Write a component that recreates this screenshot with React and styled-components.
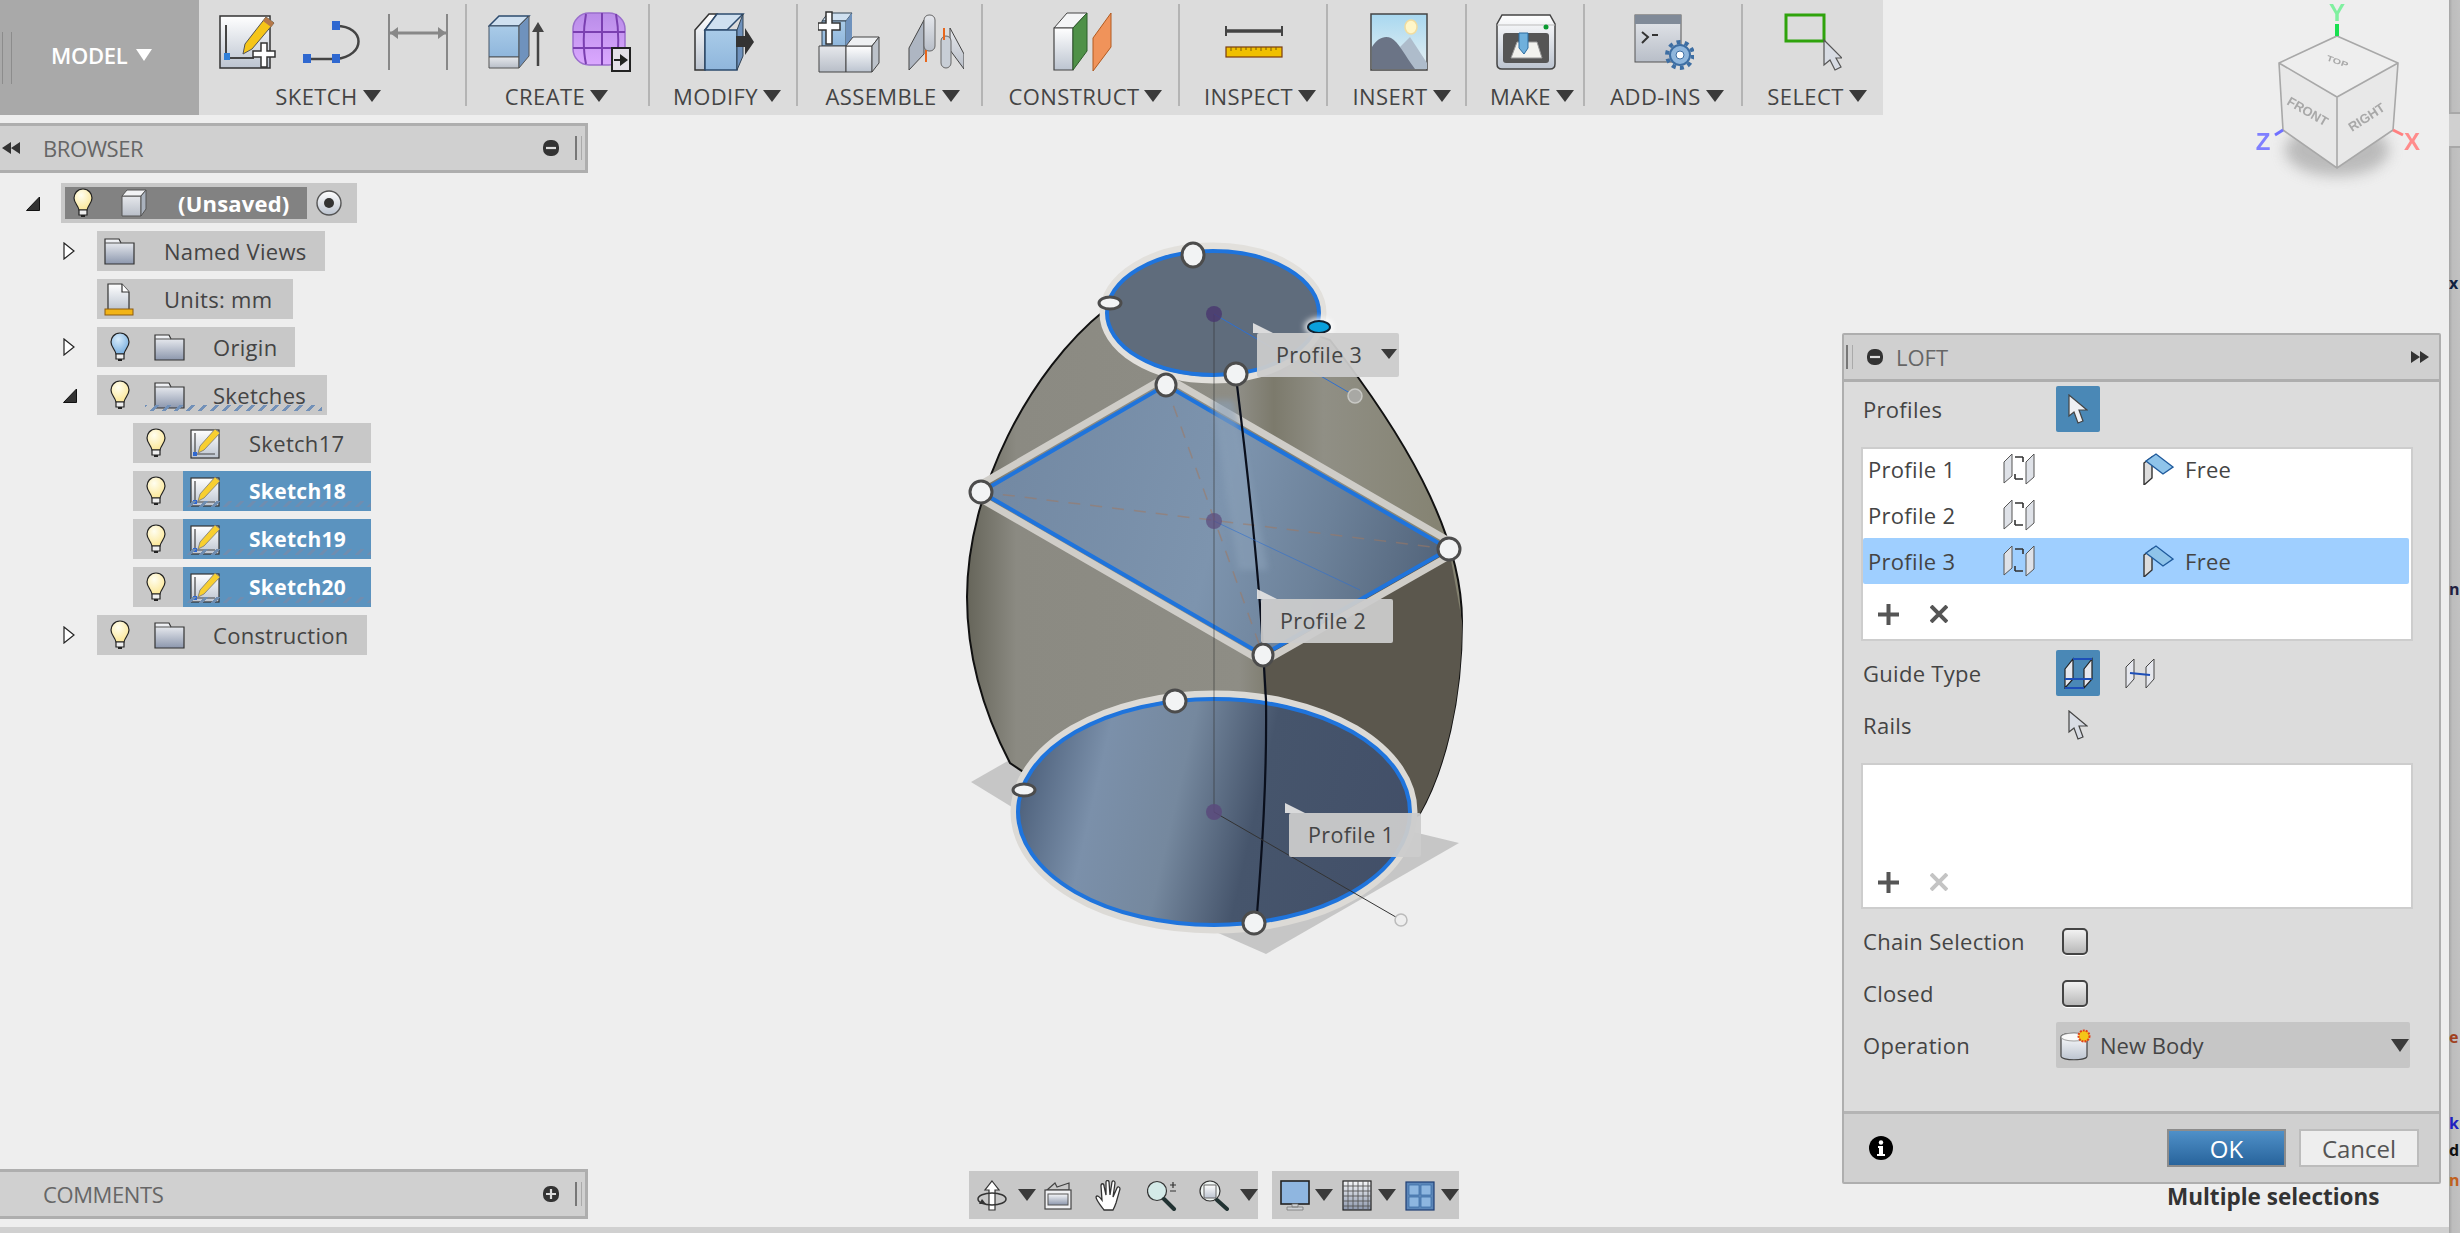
import styled, { createGlobalStyle } from "styled-components";

const tree = [
  { label: "Named Views", w: 228, icon: "folder", arrow: "closed", indent: 0 },
  { label: "Units: mm", w: 196, icon: "units", indent: 0 },
  { label: "Origin", w: 198, bulb: "blue", icon: "folder", arrow: "closed", indent: 0 },
  { label: "Sketches", w: 230, bulb: "yellow", icon: "folder", arrow: "open", indent: 0, ticks: true },
  { label: "Sketch17", w: 238, bulb: "yellow", icon: "sketch", indent: 36 },
  { label: "Sketch18", w: 238, bulb: "yellow", icon: "sketch", indent: 36, selected: true },
  { label: "Sketch19", w: 238, bulb: "yellow", icon: "sketch", indent: 36, selected: true },
  { label: "Sketch20", w: 238, bulb: "yellow", icon: "sketch", indent: 36, selected: true },
  { label: "Construction", w: 270, bulb: "yellow", icon: "folder", arrow: "closed", indent: 0 },
];

function Defs() {
  return (
    <HiddenSvg>
      <defs>
        <linearGradient id="paper" x1="0" y1="0" x2="0" y2="1">
          <stop offset="0" stopColor="#ffffff" />
          <stop offset="1" stopColor="#bcc4d0" />
        </linearGradient>
        <linearGradient id="steel" x1="0" y1="0" x2="0" y2="1">
          <stop offset="0" stopColor="#e6e8ec" />
          <stop offset="1" stopColor="#b8bec8" />
        </linearGradient>
        <linearGradient id="folder" x1="0" y1="0" x2="0" y2="1">
          <stop offset="0" stopColor="#f6f7f9" />
          <stop offset="1" stopColor="#8c97ad" />
        </linearGradient>
        <linearGradient id="blueFace" x1="0" y1="0" x2="0" y2="1">
          <stop offset="0" stopColor="#a9cbe8" />
          <stop offset="1" stopColor="#8fb6dc" />
        </linearGradient>
        <linearGradient id="sky" x1="0" y1="0" x2="0" y2="1">
          <stop offset="0" stopColor="#a8d8f0" />
          <stop offset="1" stopColor="#e8f0f2" />
        </linearGradient>
        <radialGradient id="bulbY" cx=".4" cy=".3" r=".8">
          <stop offset="0" stopColor="#fffef0" />
          <stop offset="1" stopColor="#fbe48c" />
        </radialGradient>
        <radialGradient id="bulbB" cx=".4" cy=".3" r=".8">
          <stop offset="0" stopColor="#d8ecfb" />
          <stop offset="1" stopColor="#6ea8dc" />
        </radialGradient>
        <linearGradient id="purple" x1="0" y1="0" x2="0" y2="1">
          <stop offset="0" stopColor="#b98ce8" />
          <stop offset="1" stopColor="#dba8ff" />
        </linearGradient>
        <linearGradient id="bodyFill" gradientUnits="userSpaceOnUse" x1="967" y1="0" x2="1462" y2="0">
          <stop offset="0" stopColor="#66655a" />
          <stop offset=".1" stopColor="#8b8a82" />
          <stop offset=".55" stopColor="#8e8d85" />
          <stop offset=".62" stopColor="#7c7a6c" />
          <stop offset=".72" stopColor="#908f85" />
          <stop offset="1" stopColor="#83816f" />
        </linearGradient>
        <linearGradient id="diamondFill" gradientUnits="userSpaceOnUse" x1="980" y1="470" x2="1449" y2="600">
          <stop offset="0" stopColor="#7288a2" />
          <stop offset=".5" stopColor="#7d94ae" />
          <stop offset=".72" stopColor="#6c8199" />
          <stop offset="1" stopColor="#4f6076" />
        </linearGradient>
        <linearGradient id="baseFill" gradientUnits="userSpaceOnUse" x1="1018" y1="770" x2="1410" y2="860">
          <stop offset="0" stopColor="#4a5d78" />
          <stop offset=".2" stopColor="#7b90aa" />
          <stop offset=".4" stopColor="#75889e" />
          <stop offset=".6" stopColor="#46556c" />
          <stop offset="1" stopColor="#424f68" />
        </linearGradient>
        <filter id="soft" x="-30%" y="-30%" width="160%" height="160%">
          <feGaussianBlur stdDeviation="7" />
        </filter>
        <filter id="softer" x="-30%" y="-30%" width="160%" height="160%">
          <feGaussianBlur stdDeviation="3" />
        </filter>
      </defs>
    </HiddenSvg>
  );
}

function SketchIcon() {
  return (
    <svg width="58" height="58" viewBox="0 0 58 58">
      <path d="M2 3h50v52H2z" fill="url(#paper)" stroke="#333" strokeWidth="1.5" />
      <path d="M8 12v33h28" fill="none" stroke="#444" strokeWidth="2" />
      <rect x="6" y="40" width="6" height="7" fill="#2f7fd8" />
      <path d="M48 4l8 6-22 26-9 5 2-10z" fill="#f5c518" stroke="#555" strokeWidth="1" />
      <path d="M48 4l8 6-3 4-8-6z" fill="#b5784a" />
      <path d="M35 38h8v-8h6v8h8v6h-8v10h-6V44h-8z" fill="#fff" stroke="#333" strokeWidth="1.5" />
    </svg>
  );
}

function SplineIcon() {
  return (
    <svg width="60" height="44" viewBox="0 0 60 44">
      <path d="M34 6c30 0 30 30 0 33H6" fill="none" stroke="#444" strokeWidth="2.5" />
      <rect x="30" y="1" width="8" height="9" fill="#2f68d0" />
      <rect x="1" y="34" width="8" height="9" fill="#2f68d0" />
      <rect x="30" y="34" width="8" height="9" fill="#2f68d0" />
    </svg>
  );
}

function DimensionIcon() {
  return (
    <svg width="60" height="58" viewBox="0 0 60 58">
      <path d="M1 1v56M59 1v56" stroke="#888" strokeWidth="2" />
      <path d="M2 20h56" stroke="#888" strokeWidth="3" />
      <path d="M2 20l8-6v12zM58 20l-8-6v12z" fill="#888" />
    </svg>
  );
}

function ExtrudeIcon() {
  return (
    <svg width="56" height="56" viewBox="0 0 56 56">
      <path d="M1 12l10-10h30L31 12z" fill="#cfe0f0" stroke="#2d4b6e" strokeWidth="1.5" />
      <path d="M1 12h30v31H1z" fill="url(#blueFace)" stroke="#456" strokeWidth="1" />
      <path d="M1 43h30v11H1z" fill="url(#steel)" stroke="#555" strokeWidth="1" />
      <path d="M31 12l10-10v40L31 54z" fill="#6f92bd" stroke="#555" strokeWidth="1" />
      <path d="M50 52V14" stroke="#444" strokeWidth="2.5" />
      <path d="M50 8l6 10H44z" fill="#444" />
    </svg>
  );
}

function FormIcon() {
  return (
    <svg width="60" height="60" viewBox="0 0 60 60">
      <rect x="1" y="1" width="52" height="52" rx="16" fill="url(#purple)" stroke="#9a6ecc" strokeWidth="1.5" />
      <path d="M1 20h52M1 36h52M14 2c-3 16-3 36 0 50M30 1v52M44 2c3 16 3 36 0 50" fill="none" stroke="#7a3fb0" strokeWidth="2" />
      <rect x="40" y="36" width="18" height="23" fill="#e4e0e8" stroke="#222" strokeWidth="2" />
      <path d="M42 47h6v-5l8 6-8 6v-5h-6z" fill="#222" />
    </svg>
  );
}

function ModifyIcon() {
  return (
    <svg width="60" height="60" viewBox="0 0 60 60">
      <path d="M1 18L15 2h8L11 18v40H1z" fill="url(#paper)" stroke="#333" strokeWidth="1.5" />
      <path d="M11 18L23 2h26L33 18z" fill="#cfe0f0" stroke="#2d4b6e" strokeWidth="1.5" />
      <path d="M11 18h32v40H11z" fill="url(#blueFace)" stroke="#2d4b6e" strokeWidth="1.5" />
      <path d="M43 18L49 2v42L43 58z" fill="#6f92bd" stroke="#345" strokeWidth="1" />
      <path d="M42 22h9v-8l9 14-9 13v-8h-9z" fill="#333" transform="translate(0 2)" />
    </svg>
  );
}

function AssembleIcon() {
  return (
    <svg width="62" height="62" viewBox="0 0 62 62">
      <path d="M4 10l6-8h24l-6 8z" fill="#cfe0f0" stroke="#345" strokeWidth="1" />
      <path d="M4 10h24v25H4z" fill="url(#blueFace)" stroke="#345" strokeWidth="1" />
      <path d="M28 10l6-8v26l-6 7z" fill="#6f92bd" />
      <path d="M1 35h27v26H1z" fill="url(#steel)" stroke="#444" strokeWidth="1" />
      <path d="M28 35h26v26H28z" fill="url(#paper)" stroke="#444" strokeWidth="1" />
      <path d="M28 35l7-9h26l-7 9z" fill="#eef0f2" stroke="#444" strokeWidth="1" />
      <path d="M54 35l7-9v26l-7 9z" fill="#bcc2ca" stroke="#444" strokeWidth="1" />
      <path d="M7 1h6v11h8v7h-8v14H7V19H-1v-7h8z" fill="#fff" stroke="#333" strokeWidth="1.5" transform="translate(1 0)" />
    </svg>
  );
}

function JointIcon() {
  return (
    <svg width="56" height="56" viewBox="0 0 56 56">
      <path d="M1 34L16 6v34L1 56z" fill="#aeb6c2" stroke="#444" strokeWidth="1" />
      <rect x="16" y="1" width="11" height="36" rx="5" fill="url(#steel)" stroke="#666" strokeWidth="1" />
      <path d="M42 14l14 26v15L42 36z" fill="url(#steel)" stroke="#444" strokeWidth="1" />
      <rect x="33" y="22" width="10" height="32" rx="5" fill="#c8ced6" stroke="#666" strokeWidth="1" />
      <path d="M36 14v12M18 36v12" stroke="#e8661c" strokeWidth="2" />
    </svg>
  );
}

function ConstructIcon() {
  return (
    <svg width="60" height="60" viewBox="0 0 60 60">
      <path d="M1 16L14 1h20L20 16z" fill="#f4f5f6" stroke="#444" strokeWidth="1" />
      <path d="M1 16h19v42H1z" fill="url(#paper)" stroke="#444" strokeWidth="1.2" />
      <path d="M20 16L34 1v38L20 58z" fill="#4f9148" stroke="#2d5d2a" strokeWidth="1" />
      <path d="M40 26L58 1v34L40 59z" fill="#f0935a" stroke="#b25a20" strokeWidth="1" />
    </svg>
  );
}

function InspectIcon() {
  return (
    <svg width="58" height="32" viewBox="0 0 58 32">
      <path d="M1 0v10M57 0v10" stroke="#444" strokeWidth="2" />
      <path d="M1 5h56" stroke="#444" strokeWidth="3.5" />
      <rect x="1" y="21" width="56" height="10" fill="#f0c000" stroke="#7a3d10" strokeWidth="1.2" />
      <path d="M6 21v4M11 21v3M16 21v4M21 21v3M26 21v4M31 21v3M36 21v4M41 21v3M46 21v4M51 21v3" stroke="#7a5a10" strokeWidth="1" />
    </svg>
  );
}

function InsertIcon() {
  return (
    <svg width="58" height="58" viewBox="0 0 58 58">
      <rect x="1" y="1" width="56" height="56" fill="url(#sky)" stroke="#444" strokeWidth="1.5" />
      <ellipse cx="41" cy="14" rx="6" ry="7" fill="#fff6c8" stroke="#f0dca0" strokeWidth="1.5" />
      <path d="M38 56l-8-22 10-10 17 26v6z" fill="#aebccb" />
      <path d="M2 56V34c5-9 13-12 19-9 8 4 14 18 24 31z" fill="#6b7486" />
    </svg>
  );
}

function MakeIcon() {
  return (
    <svg width="60" height="56" viewBox="0 0 60 56">
      <path d="M6 1h48l5 9v40c0 3-2 5-5 5H6c-3 0-5-2-5-5V10z" fill="url(#paper)" stroke="#444" strokeWidth="1.5" />
      <path d="M1 11h58" stroke="#bbb" strokeWidth="1" />
      <circle cx="50" cy="13" r="2.5" fill="#0a9a30" />
      <rect x="7" y="19" width="46" height="30" rx="3" fill="#555" />
      <path d="M15 44l6-16h20l5 16z" fill="#f2f2ee" stroke="#999" strokeWidth="1" />
      <path d="M22 19h9v15l-4 6-5-6z" fill="#6fb0dc" stroke="#2c6ca0" strokeWidth="1" transform="translate(1 0)" />
    </svg>
  );
}

function AddInsIcon() {
  return (
    <svg width="60" height="56" viewBox="0 0 60 56">
      <rect x="1" y="1" width="46" height="47" fill="url(#steel)" stroke="#555" strokeWidth="1" />
      <rect x="1" y="1" width="46" height="9" fill="#808a98" />
      <path d="M8 18l6 5-6 6" fill="none" stroke="#333" strokeWidth="2" />
      <path d="M18 21h6" stroke="#333" strokeWidth="2" />
      <circle cx="46" cy="41" r="10" fill="#8fb6dc" stroke="#3d6ea3" strokeWidth="2" />
      <circle cx="46" cy="41" r="13" fill="none" stroke="#3d6ea3" strokeWidth="4" strokeDasharray="4 4.2" />
      <circle cx="46" cy="41" r="4" fill="#fff" stroke="#3d6ea3" strokeWidth="1" />
    </svg>
  );
}

function CursorIcon({ w = 20, h = 30, fill = "#d8dce4" }) {
  return (
    <svg width={w} height={h} viewBox="0 0 20 30">
      <path d="M1 1v21l5-4 4 11 5-2-4-11h8z" fill={fill} stroke="#444" strokeWidth="1.2" />
    </svg>
  );
}

function SelectIcon() {
  return (
    <svg width="58" height="58" viewBox="0 0 58 58">
      <rect x="2" y="2" width="38" height="26" fill="none" stroke="#2fa30c" strokeWidth="3" />
      <path d="M40 27v25l6-5 5 10 6-3-5-9h6z" fill="#d8dce4" stroke="#555" strokeWidth="1.2" />
    </svg>
  );
}

function Bulb({ color }) {
  return (
    <svg width="20" height="30" viewBox="0 0 20 30">
      <path
        d="M10 1C4 1 1 6 1 10c0 5 4 7 5 12h8c1-5 5-7 5-12 0-4-3-9-9-9z"
        fill={color === "blue" ? "url(#bulbB)" : "url(#bulbY)"}
        stroke="#222"
        strokeWidth="1.2"
      />
      <path d="M6 22h8v5H6z" fill="#eee" stroke="#222" strokeWidth="1.2" />
      <path d="M8 27h4v2H8z" fill="#222" />
    </svg>
  );
}

function FolderIcon() {
  return (
    <svg width="31" height="27" viewBox="0 0 31 27">
      <path d="M1 1h14l2 4h13v21H1z" fill="url(#folder)" stroke="#333" strokeWidth="1.2" />
      <path d="M1 5h16" stroke="#555" strokeWidth="1" />
    </svg>
  );
}

function UnitsIcon() {
  return (
    <svg width="30" height="33" viewBox="0 0 30 33">
      <path d="M4 1h14l7 8v18H4z" fill="url(#paper)" stroke="#333" strokeWidth="1.2" />
      <path d="M18 1v8h7" fill="#fff" stroke="#333" strokeWidth="1.2" />
      <rect x="1" y="26" width="28" height="6" fill="#f2b416" stroke="#8a5a10" strokeWidth="1" />
    </svg>
  );
}

function TreeSketchIcon() {
  return (
    <svg width="30" height="31" viewBox="0 0 30 31">
      <rect x="1" y="2" width="28" height="28" fill="url(#paper)" stroke="#333" strokeWidth="1.2" />
      <path d="M5 5v21h20" fill="none" stroke="#444" strokeWidth="1.2" />
      <rect x="3" y="24" width="4" height="4" fill="#2f68d0" />
      <path d="M25 1l5 4-16 17-6 3 2-7z" fill="#f8cf30" stroke="#777" strokeWidth=".8" />
    </svg>
  );
}

function CubeIcon() {
  return (
    <svg width="26" height="28" viewBox="0 0 26 28">
      <path d="M1 7h19v20H1z" fill="url(#steel)" stroke="#555" />
      <path d="M1 7l5-6h19l-5 6z" fill="#f2f3f5" stroke="#555" />
      <path d="M20 7l5-6v19l-5 7z" fill="#aab2bd" stroke="#555" />
    </svg>
  );
}

function Radio() {
  return (
    <svg width="26" height="26" viewBox="0 0 26 26">
      <circle cx="13" cy="13" r="12" fill="url(#paper)" stroke="#555" strokeWidth="1.4" />
      <circle cx="13" cy="13" r="5" fill="#333" />
    </svg>
  );
}

function TreeArrow({ kind }) {
  if (kind === "open") {
    return (
      <svg width="14" height="15" viewBox="0 0 14 15">
        <path d="M13.5 1v13.5H.5z" fill="#333" stroke="#111" />
      </svg>
    );
  }
  if (kind === "closed") {
    return (
      <svg width="12" height="18" viewBox="0 0 12 18">
        <path d="M1 1l10 8-10 8z" fill="#fff" stroke="#222" strokeWidth="1.2" />
      </svg>
    );
  }
  return null;
}

function DoubleArrow({ right }) {
  return (
    <svg width="20" height="12" viewBox="0 0 20 12">
      <path d={right ? "M1 0l9 6-9 6zM10 0l9 6-9 6z" : "M19 0l-9 6 9 6zM10 0L1 6l9 6z"} fill="#333" />
    </svg>
  );
}

function PillButton({ plus }) {
  return (
    <svg width="16" height="16" viewBox="0 0 16 16">
      <rect width="16" height="16" rx="7" fill="#333" />
      <path d={plus ? "M3 8h10M8 3v10" : "M3 8h10"} stroke="#ddd" strokeWidth="2.2" />
    </svg>
  );
}

function FlipIcon() {
  return (
    <svg width="32" height="32" viewBox="0 0 32 32">
      <path d="M1 9l8-8v22l-8 7zM23 9l8-8v23l-8 7z" fill="#dfe2e8" stroke="#555" strokeWidth="1" />
      <path d="M12 4h8M20 4v5M12 26h8M12 26v-5" stroke="#333" strokeWidth="1.6" fill="none" />
    </svg>
  );
}

function FreeIcon() {
  return (
    <svg width="31" height="32" viewBox="0 0 31 32">
      <path d="M1 10l8-6v21l-8 7z" fill="#ddd" stroke="#333" strokeWidth="1.4" />
      <path d="M3 8l10-7 17 13-10 7z" fill="#8fc4ea" stroke="#1f5a9c" strokeWidth="1.4" />
    </svg>
  );
}

function Plus({ color = "#555" }) {
  return (
    <svg width="21" height="21" viewBox="0 0 21 21">
      <path d="M0 10.5h21M10.5 0v21" stroke={color} strokeWidth="4" />
    </svg>
  );
}

function Cross({ color = "#555" }) {
  return (
    <svg width="18" height="18" viewBox="0 0 18 18">
      <path d="M1 1l16 16M17 1L1 17" stroke={color} strokeWidth="4" />
    </svg>
  );
}

function GuideIcon() {
  return (
    <svg width="30" height="32" viewBox="0 0 30 32">
      <path d="M2 12l8-10v20l-8 9zM21 12l8-10v20l-8 9z" fill="#e6e8ee" stroke="#222" strokeWidth="1.2" />
      <path d="M10 2h19M2 31h19M2 22h27" stroke="#1d4fb8" strokeWidth="2" fill="none" />
    </svg>
  );
}

function RailIcon() {
  return (
    <svg width="30" height="32" viewBox="0 0 30 32">
      <path d="M1 10l8-8v20l-8 9zM21 10l8-8v20l-8 9z" fill="#e6e8ee" stroke="#444" strokeWidth="1" />
      <path d="M5 16l20 2" stroke="#1d4fb8" strokeWidth="2" />
    </svg>
  );
}

function NewBodyIcon() {
  return (
    <svg width="31" height="32" viewBox="0 0 31 32">
      <path d="M1 8c0-5 26-5 26 0v19c0 5-26 5-26 0z" fill="url(#paper)" stroke="#444" strokeWidth="1.2" />
      <ellipse cx="14" cy="8" rx="13" ry="4" fill="#fafafa" stroke="#888" strokeWidth=".8" />
      <circle cx="24" cy="7" r="5.5" fill="#f5c518" stroke="#e0401a" strokeWidth="2" strokeDasharray="2 1" />
    </svg>
  );
}

function InfoIcon() {
  return (
    <svg width="24" height="24" viewBox="0 0 24 24">
      <circle cx="12" cy="12" r="12" fill="#000" />
      <circle cx="12" cy="6.5" r="2.2" fill="#fff" />
      <path d="M9 10h5v8h2v2H8v-2h2v-6H9z" fill="#fff" />
    </svg>
  );
}

function OrbitIcon() {
  return (
    <svg width="30" height="31" viewBox="0 0 30 31">
      <path d="M15 1l7 9h-4v20h-6V10H8z" fill="#fff" stroke="#333" strokeWidth="1.2" />
      <ellipse cx="15" cy="19" rx="14" ry="6" fill="none" stroke="#333" strokeWidth="1.5" />
      <path d="M2 24l3-5 4 5z" fill="#333" />
    </svg>
  );
}

function CameraIcon() {
  return (
    <svg width="28" height="30" viewBox="0 0 28 30">
      <path d="M3 10l8-7 2 4 12-4v7z" fill="none" stroke="#444" strokeWidth="1.2" />
      <rect x="1" y="10" width="26" height="19" fill="#f0f1f3" stroke="#444" strokeWidth="1.2" />
      <rect x="4" y="14" width="20" height="11" fill="url(#folder)" stroke="#555" strokeWidth="1" />
    </svg>
  );
}

function HandIcon() {
  return (
    <svg width="30" height="31" viewBox="0 0 30 31">
      <path
        d="M9 30C6 26 1 20 1 17c1-2 3-1 6 3L6 6c0-3 3-3 3 0l2 9V2c0-2 3-2 3 0l1 13 2-13c1-2 3-1 3 1l-2 14 4-9c1-2 3-1 3 1l-4 14c-1 3-2 5-3 7z"
        fill="#fff"
        stroke="#333"
        strokeWidth="1.3"
      />
    </svg>
  );
}

function ZoomIcon() {
  return (
    <svg width="30" height="31" viewBox="0 0 30 31">
      <circle cx="10" cy="11" r="9.5" fill="#d4eae8" stroke="#333" strokeWidth="1.2" />
      <path d="M17 19l10 10" stroke="#233" strokeWidth="4" strokeLinecap="round" />
      <path d="M23 5h6M26 2v6M23 11h6" stroke="#333" strokeWidth="1.2" />
    </svg>
  );
}

function FitIcon() {
  return (
    <svg width="30" height="31" viewBox="0 0 30 31">
      <circle cx="11" cy="11" r="10" fill="#eef4f2" stroke="#333" strokeWidth="1.2" />
      <rect x="5" y="5" width="12" height="13" fill="url(#paper)" stroke="#666" strokeWidth="1" />
      <path d="M18 20l10 9" stroke="#233" strokeWidth="4" strokeLinecap="round" />
    </svg>
  );
}

function MonitorIcon() {
  return (
    <svg width="30" height="31" viewBox="0 0 30 31">
      <rect x="1" y="1" width="28" height="23" fill="#8fb6e0" stroke="#222" strokeWidth="1.6" />
      <path d="M12 24h6v3h-6zM7 27h16v3H7z" fill="#cfd2d6" stroke="#777" strokeWidth=".8" />
    </svg>
  );
}

function GridIcon() {
  return (
    <svg width="30" height="31" viewBox="0 0 30 31">
      <rect x="1" y="1" width="28" height="29" fill="url(#folder)" stroke="#222" strokeWidth="1.2" />
      <path d="M6 1v29M11 1v29M16 1v29M21 1v29M26 1v29M1 6h28M1 11h28M1 16h28M1 21h28M1 26h28" stroke="#555" strokeWidth=".9" />
    </svg>
  );
}

function ViewsIcon() {
  return (
    <svg width="30" height="31" viewBox="0 0 30 31">
      <rect x="1" y="2" width="28" height="28" fill="#5b86b8" stroke="#1f3f74" strokeWidth="1.2" />
      <path d="M4 5h10v10H4zM16 5h10v10H16zM4 17h10v10H4zM16 17h10v10H16z" fill="#8db6e0" stroke="#3d6ea8" strokeWidth=".8" />
    </svg>
  );
}

const handles = [
  [1193, 255, 11, 12],
  [1110, 303, 11, 6],
  [1236, 374, 11, 11],
  [1166, 385, 10, 11],
  [981, 492, 11, 11],
  [1449, 549, 11, 11],
  [1263, 655, 10, 11],
  [1175, 701, 11, 11],
  [1024, 790, 11, 6],
  [1254, 923, 11, 11],
];

function Model() {
  return (
    <ModelSvg viewBox="930 220 560 740">
      <path d="M971 782l70-40 418 101-193 111-50-22z" fill="#c6c6c6" />
      <path
        d="M1105 310C1030 370 967 490 967 597C967 660 985 715 1010 763L1214 900L1419 815C1445 770 1462 700 1462 621C1462 530 1400 430 1330 340L1213 300z"
        fill="url(#bodyFill)"
        stroke="#111"
        strokeWidth="2"
      />
      <path d="M1263 655L1449 549L1462 621C1462 700 1445 770 1419 815L1266 780z" fill="#5b574d" />
      <ellipse cx="1213" cy="313" rx="110" ry="67" fill="none" stroke="#e2e0dc" strokeWidth="7" />
      <ellipse cx="1213" cy="313" rx="106" ry="62" fill="#5f6c7c" stroke="#1f74dc" strokeWidth="4" />
      <path d="M981 484L1166 377L1449 541M981 499L1263 662L1449 556" fill="none" stroke="#cfcdc8" strokeWidth="7" />
      <path d="M981 492L1166 385L1449 549L1263 655z" fill="url(#diamondFill)" stroke="#1f74dc" strokeWidth="4" />
      <path d="M1212 400l22 0 34 170-30 0z" fill="#8aa0b8" opacity=".6" filter="url(#softer)" />
      <ellipse cx="1214" cy="812" rx="200" ry="118" fill="none" stroke="#dcdad6" strokeWidth="7" />
      <ellipse cx="1214" cy="812" rx="196" ry="113" fill="url(#baseFill)" stroke="#1f74dc" strokeWidth="4" />
      <path d="M1214 314v498" stroke="#333" strokeOpacity=".4" strokeWidth="1.5" />
      <path d="M1166 385L1263 655M981 492L1449 549" stroke="#a07860" strokeOpacity=".55" strokeWidth="1.5" strokeDasharray="12 10" fill="none" />
      <path d="M1237 385C1245 450 1258 560 1263 650L1266 700C1267 780 1262 850 1257 914" fill="none" stroke="#0a0f1c" strokeWidth="2.2" />
      <path d="M1214 314L1355 396" stroke="#2e6fd0" strokeWidth="1" />
      <path d="M1214 521L1360 590" stroke="#2e6fd0" strokeOpacity=".6" strokeWidth="1" />
      <path d="M1214 812L1401 920" stroke="#333" strokeWidth="1" />
      <circle cx="1214" cy="314" r="8" fill="#4a3a70" opacity=".85" />
      <circle cx="1214" cy="521" r="8" fill="#5b4a7c" opacity=".7" />
      <circle cx="1214" cy="812" r="8" fill="#5b4a7c" opacity=".85" />
      <circle cx="1355" cy="396" r="7" fill="#a8a8a4" stroke="#c8c8c4" strokeWidth="1.5" />
      <circle cx="1401" cy="920" r="6" fill="#eee" stroke="#bbb" strokeWidth="1.5" />
      {handles.map(([cx, cy, rx, ry]) => (
        <ellipse key={cx} cx={cx} cy={cy} rx={rx} ry={ry} fill="#f2f3f4" stroke="#4c4c4c" strokeWidth="3" />
      ))}
      <ellipse cx="1319" cy="327" rx="14" ry="9" fill="#fff" filter="url(#softer)" />
      <ellipse cx="1319" cy="327" rx="11" ry="6" fill="#0aa0dc" stroke="#102030" strokeWidth="2" />
    </ModelSvg>
  );
}

function ViewCube() {
  return (
    <CubeSvg viewBox="2250 0 180 190">
      <ellipse cx="2337" cy="150" rx="52" ry="26" fill="#999" opacity=".6" filter="url(#soft)" />
      <path d="M2337 36L2398 63L2393 130L2337 168L2283 130L2279 63z" fill="#e8e8e8" />
      <path d="M2337 36L2398 63L2337 97L2279 63z" fill="#eeeeee" />
      <path d="M2337 36L2398 63L2393 130L2337 168L2283 130L2279 63zM2279 63L2337 97L2398 63M2337 97V168" fill="none" stroke="#a8a8a8" strokeWidth="1.6" />
      <path d="M2337 36V24" stroke="#18e050" strokeWidth="4" />
      <path d="M2283 130l-8 5" stroke="#7070ff" strokeWidth="3" />
      <path d="M2393 130l10 5" stroke="#ff8080" strokeWidth="3" />
      <CubeText transform="translate(2326 60) rotate(20) scale(1 .7)" fontSize="11">TOP</CubeText>
      <CubeText transform="translate(2286 104) rotate(30)" fontSize="13">FRONT</CubeText>
      <CubeText transform="translate(2352 132) rotate(-33)" fontSize="13">RIGHT</CubeText>
      <AxisText x="2337" y="21" fill="#80f0a0">Y</AxisText>
      <AxisText x="2263" y="150" fill="#8080ff">Z</AxisText>
      <AxisText x="2412" y="150" fill="#ff8c8c">X</AxisText>
    </CubeSvg>
  );
}

function ProfileRow({ name, free, active }) {
  return (
    <ListRow $active={active}>
      <ListName>{name}</ListName>
      <FlipIcon />
      {free && (
        <FreeCell>
          <FreeIcon />
          <span>Free</span>
        </FreeCell>
      )}
    </ListRow>
  );
}

function BrowserRow({ row }) {
  return (
    <TreeRow $indent={row.indent}>
      <ArrowSlot>{row.arrow && <TreeArrow kind={row.arrow} />}</ArrowSlot>
      <Chip $w={row.w} $ticks={row.ticks}>
        {row.bulb && (
          <BulbSlot>
            <Bulb color={row.bulb} />
          </BulbSlot>
        )}
        <ChipBody $selected={row.selected}>
          <IconSlot $plain={!row.bulb}>
            {row.icon === "folder" && <FolderIcon />}
            {row.icon === "units" && <UnitsIcon />}
            {row.icon === "sketch" && <TreeSketchIcon />}
          </IconSlot>
          <RowText $selected={row.selected} $plain={!row.bulb}>{row.label}</RowText>
        </ChipBody>
      </Chip>
    </TreeRow>
  );
}

export default function App() {
  return (
    <Page>
      <GlobalStyle />
      <Defs />
      <Window>
        <Toolbar>
          <ModelTab>
            <Grip />
            <ModelLabel>
              MODEL <Caret $w={17} $h={12} $color="#fff" />
            </ModelLabel>
          </ModelTab>
          <Group $w={268} $sep>
            <GroupIcons $gap={26}>
              <SketchIcon />
              <SplineIcon />
              <DimensionIcon />
            </GroupIcons>
            <GroupLabel $nudge={-5}>
              SKETCH <Caret />
            </GroupLabel>
          </Group>
          <Group $w={183} $sep>
            <GroupIcons $gap={28} $nudge={3}>
              <ExtrudeIcon />
              <FormIcon />
            </GroupIcons>
            <GroupLabel $nudge={-2}>
              CREATE <Caret />
            </GroupLabel>
          </Group>
          <Group $w={148} $sep>
            <GroupIcons>
              <ModifyIcon />
            </GroupIcons>
            <GroupLabel $nudge={3}>
              MODIFY <Caret />
            </GroupLabel>
          </Group>
          <Group $w={185} $sep>
            <GroupIcons $gap={28}>
              <AssembleIcon />
              <JointIcon />
            </GroupIcons>
            <GroupLabel $nudge={2}>
              ASSEMBLE <Caret />
            </GroupLabel>
          </Group>
          <Group $w={197} $sep>
            <GroupIcons $nudge={2}>
              <ConstructIcon />
            </GroupIcons>
            <GroupLabel $nudge={4}>
              CONSTRUCT <Caret />
            </GroupLabel>
          </Group>
          <Group $w={148} $sep>
            <GroupIcons>
              <InspectIcon />
            </GroupIcons>
            <GroupLabel $nudge={6}>
              INSPECT <Caret />
            </GroupLabel>
          </Group>
          <Group $w={139} $sep>
            <GroupIcons $nudge={2}>
              <InsertIcon />
            </GroupIcons>
            <GroupLabel $nudge={4}>
              INSERT <Caret />
            </GroupLabel>
          </Group>
          <Group $w={118} $sep>
            <GroupIcons>
              <MakeIcon />
            </GroupIcons>
            <GroupLabel $nudge={6}>
              MAKE <Caret />
            </GroupLabel>
          </Group>
          <Group $w={158} $sep>
            <GroupIcons>
              <AddInsIcon />
            </GroupIcons>
            <GroupLabel $nudge={3}>
              ADD-INS <Caret />
            </GroupLabel>
          </Group>
          <Group $w={140}>
            <GroupIcons>
              <SelectIcon />
            </GroupIcons>
            <GroupLabel $nudge={4}>
              SELECT <Caret />
            </GroupLabel>
          </Group>
        </Toolbar>

        <Main>
          <LeftColumn>
            <DockBar>
              <DoubleArrow />
              <DockTitle>BROWSER</DockTitle>
              <PillButton />
              <DockGrip />
            </DockBar>
            <Tree>
              <RootRow>
                <ArrowSlot $root>
                  <TreeArrow kind="open" />
                </ArrowSlot>
                <RootChip>
                  <RootInner>
                    <Bulb color="yellow" />
                    <CubeIcon />
                    <RootLabel>(Unsaved)</RootLabel>
                  </RootInner>
                  <Radio />
                </RootChip>
              </RootRow>
              {tree.map((row) => (
                <BrowserRow key={row.label} row={row} />
              ))}
            </Tree>
            <CommentsBar>
              <DockTitle>COMMENTS</DockTitle>
              <PillButton plus />
              <DockGrip />
            </CommentsBar>
          </LeftColumn>

          <CenterColumn>
            <Scene>
              <Model />
              <ProfileTag $left={327} $top={113} $w={142}>
                Profile 3 <Caret $w={17} $h={10} />
              </ProfileTag>
              <ProfileTag $left={331} $top={379} $w={132}>
                Profile 2
              </ProfileTag>
              <ProfileTag $left={359} $top={593} $w={132}>
                Profile 1
              </ProfileTag>
            </Scene>
            <NavRow>
              <NavBar>
                <OrbitIcon />
                <NavCaret $gap={11} />
                <NavIcon $gap={8}>
                  <CameraIcon />
                </NavIcon>
                <NavIcon $gap={23}>
                  <HandIcon />
                </NavIcon>
                <NavIcon $gap={22}>
                  <ZoomIcon />
                </NavIcon>
                <NavIcon $gap={22}>
                  <FitIcon />
                </NavIcon>
                <NavCaret $gap={11} />
              </NavBar>
              <NavBar>
                <MonitorIcon />
                <NavCaret $gap={5} />
                <NavIcon $gap={9}>
                  <GridIcon />
                </NavIcon>
                <NavCaret $gap={6} />
                <NavIcon $gap={9}>
                  <ViewsIcon />
                </NavIcon>
                <NavCaret $gap={6} />
              </NavBar>
            </NavRow>
          </CenterColumn>

          <RightColumn>
            <LoftPanel>
              <LoftHeader>
                <DockGrip $left />
                <PillButton />
                <LoftTitle>LOFT</LoftTitle>
                <DoubleArrow right />
              </LoftHeader>
              <LoftBody>
                <FieldRow>
                  <FieldLabel>Profiles</FieldLabel>
                  <ToolButton $active>
                    <CursorIcon fill="#eef0f4" />
                  </ToolButton>
                </FieldRow>
                <ListBox $h={194}>
                  <RowList>
                    <ProfileRow name="Profile 1" free />
                    <ProfileRow name="Profile 2" />
                    <ProfileRow name="Profile 3" free active />
                  </RowList>
                  <ActionRow>
                    <Plus />
                    <Cross />
                  </ActionRow>
                </ListBox>
                <FieldRow>
                  <FieldLabel>Guide Type</FieldLabel>
                  <ToolButton $active>
                    <GuideIcon />
                  </ToolButton>
                  <ToolButton $gap={18}>
                    <RailIcon />
                  </ToolButton>
                </FieldRow>
                <FieldRow>
                  <FieldLabel>Rails</FieldLabel>
                  <ToolButton>
                    <CursorIcon />
                  </ToolButton>
                </FieldRow>
                <ListBox $h={146}>
                  <ActionRow>
                    <Plus />
                    <Cross color="#c4c4c4" />
                  </ActionRow>
                </ListBox>
                <FieldRow>
                  <FieldLabel>Chain Selection</FieldLabel>
                  <CheckBox />
                </FieldRow>
                <FieldRow>
                  <FieldLabel>Closed</FieldLabel>
                  <CheckBox />
                </FieldRow>
                <FieldRow>
                  <FieldLabel>Operation</FieldLabel>
                  <SelectBox>
                    <NewBodyIcon />
                    <SelectText>New Body</SelectText>
                    <Caret $w={18} $h={13} />
                  </SelectBox>
                </FieldRow>
              </LoftBody>
              <LoftFooter>
                <InfoIcon />
                <FooterButtons>
                  <OkButton>OK</OkButton>
                  <CancelButton>Cancel</CancelButton>
                </FooterButtons>
              </LoftFooter>
            </LoftPanel>
            <Caption>Multiple selections</Caption>
          </RightColumn>
        </Main>
        <BottomBar />
        <ViewCube />
      </Window>
      <SideStrip>
        <StripBand />
        <Fragment $top={272} $color="#102040">x</Fragment>
        <Fragment $top={578} $color="#202040">n</Fragment>
        <Fragment $top={1026} $color="#a04020">e</Fragment>
        <Fragment $top={1112} $color="#2020c0">k</Fragment>
        <Fragment $top={1139} $color="#101010">d</Fragment>
        <Fragment $top={1169} $color="#c06020">n</Fragment>
      </SideStrip>
    </Page>
  );
}

const GlobalStyle = createGlobalStyle`
  html, body {
    margin: 0;
    padding: 0;
    background: #eeeeee;
  }

  body {
    font-family: "Open Sans", "Liberation Sans", sans-serif;
    overflow: hidden;
  }

  svg {
    display: block;
    flex: none;
  }
`;

const HiddenSvg = styled.svg`
  position: absolute;
  width: 0;
  height: 0;
`;

const Page = styled.div`
  display: flex;
  width: 2460px;
  height: 1233px;
  overflow: hidden;
`;

const Window = styled.div`
  position: relative;
  display: flex;
  flex-direction: column;
  width: 2449px;
  height: 100%;
  background: #eeeeee;
`;

const SideStrip = styled.div`
  position: relative;
  flex: 1;
  overflow: hidden;
  background: linear-gradient(90deg, #a4a4a4, #bdbdbd 30%, #c2c2c2);
`;

const StripBand = styled.div`
  height: 32px;
  margin-top: 112px;
  background: #d0d0d0;
  border-top: 2px solid #a8a8a8;
  border-bottom: 2px solid #a8a8a8;
`;

const Fragment = styled.span`
  position: absolute;
  top: ${(p) => p.$top}px;
  left: 0;
  font-size: 16px;
  font-weight: 700;
  color: ${(p) => p.$color};
`;

const Toolbar = styled.div`
  display: flex;
  align-self: flex-start;
  height: 115px;
  background: #dcdcdc;
`;

const ModelTab = styled.div`
  display: flex;
  align-items: center;
  width: 199px;
  background: #a9a9a9;
`;

const Grip = styled.div`
  width: 8px;
  height: 52px;
  margin-left: 2px;
  border-left: 1px solid #8c8c8c;
  border-right: 1px solid #8c8c8c;
`;

const ModelLabel = styled.div`
  display: flex;
  align-items: center;
  gap: 9px;
  margin: 0 0 6px 39px;
  font-size: 22px;
  font-weight: 600;
  letter-spacing: -0.3px;
  color: #fff;
`;

const Caret = styled.i`
  display: inline-block;
  flex: none;
  width: 0;
  height: 0;
  border-left: ${(p) => (p.$w || 18) / 2}px solid transparent;
  border-right: ${(p) => (p.$w || 18) / 2}px solid transparent;
  border-top: ${(p) => p.$h || 12}px solid ${(p) => p.$color || "#3a3a3a"};
`;

const Group = styled.div`
  position: relative;
  display: flex;
  flex-direction: column;
  align-items: center;
  width: ${(p) => p.$w}px;
  box-sizing: border-box;
  padding-top: 12px;

  ${(p) =>
    p.$sep &&
    `
    &::after {
      content: "";
      position: absolute;
      top: 4px;
      right: 0;
      width: 2px;
      height: 102px;
      background: #b4b4b4;
    }
  `}
`;

const GroupIcons = styled.div`
  display: flex;
  align-items: center;
  justify-content: center;
  height: 60px;
  gap: ${(p) => p.$gap || 0}px;
  margin-left: ${(p) => p.$nudge || 0}px;
`;

const GroupLabel = styled.div`
  display: flex;
  align-items: center;
  gap: 5px;
  height: 30px;
  margin-top: 9px;
  margin-left: ${(p) => (p.$nudge || 0) * 2}px;
  font-size: 22px;
  letter-spacing: 0.4px;
  color: #444;
  white-space: nowrap;
`;

const Main = styled.div`
  flex: 1;
  display: grid;
  grid-template-columns: 588px 1fr 607px;
  min-height: 0;
`;

const LeftColumn = styled.div`
  display: flex;
  flex-direction: column;
  padding: 8px 0;
`;

const DockBar = styled.div`
  display: flex;
  align-items: center;
  height: 50px;
  box-sizing: border-box;
  padding: 0 3px 0 1px;
  background: #d0d0d0;
  border: 3px solid #aeaeae;
  border-left: 0;
`;

const CommentsBar = styled(DockBar)`
  margin-top: auto;
  padding-left: 43px;
`;

const DockTitle = styled.span`
  flex: 1;
  margin-left: 22px;
  font-size: 22px;
  letter-spacing: -0.4px;
  color: #666;

  ${CommentsBar} & {
    margin-left: 0;
  }
`;

const DockGrip = styled.div`
  width: 4px;
  height: 24px;
  margin: ${(p) => (p.$left ? "0 14px 0 0" : "0 0 0 16px")};
  border-left: 2px solid #777;
  border-right: 1px solid #aaa;
`;

const Tree = styled.div`
  display: flex;
  flex-direction: column;
  gap: 8px;
  padding-top: 10px;
`;

const TreeRow = styled.div`
  display: flex;
  align-items: center;
  height: 40px;
  padding-left: ${(p) => 63 + p.$indent}px;
`;

const RootRow = styled(TreeRow)`
  padding-left: 26px;
`;

const ArrowSlot = styled.div`
  display: flex;
  align-items: center;
  width: ${(p) => (p.$root ? 35 : 34)}px;
`;

const Chip = styled.div`
  position: relative;
  display: flex;
  align-items: stretch;
  width: ${(p) => p.$w}px;
  height: 40px;
  background: #c8c8c8;

  ${(p) =>
    p.$ticks &&
    `
    &::after {
      content: "";
      position: absolute;
      left: 48px;
      right: 5px;
      bottom: 4px;
      height: 6px;
      background: repeating-linear-gradient(-45deg, #7190b8 0 3px, transparent 3px 8.5px);
    }
  `}
`;

const BulbSlot = styled.div`
  display: flex;
  align-items: center;
  width: 50px;
  padding-left: 13px;
  box-sizing: border-box;
`;

const ChipBody = styled.div`
  position: relative;
  flex: 1;
  display: flex;
  align-items: center;
  ${(p) =>
    p.$selected &&
    `
    background: #5b93bf;

    &::after {
      content: "";
      position: absolute;
      left: 0;
      right: 0;
      bottom: 4px;
      height: 6px;
      background: repeating-linear-gradient(-45deg, #6f8db0 0 3px, transparent 3px 8.5px);
    }
  `}
`;

const IconSlot = styled.div`
  display: flex;
  justify-content: flex-start;
  width: ${(p) => (p.$plain ? 60 : 66)}px;
  padding-left: 7px;
  box-sizing: border-box;
`;

const RowText = styled.span`
  font-size: ${(p) => (p.$selected ? 21 : 22)}px;
  letter-spacing: 0.3px;
  font-weight: ${(p) => (p.$selected ? 700 : 400)};
  color: ${(p) => (p.$selected ? "#fff" : "#444")};
  margin-left: ${(p) => (p.$plain ? 7 : 0)}px;
`;

const RootChip = styled.div`
  display: flex;
  align-items: center;
  gap: 9px;
  width: 296px;
  height: 40px;
  box-sizing: border-box;
  padding-left: 4px;
  background: #c8c8c8;
`;

const RootInner = styled.div`
  display: flex;
  align-items: center;
  width: 242px;
  height: 32px;
  box-sizing: border-box;
  padding-left: 8px;
  background: #828282;

  svg:nth-child(2) {
    margin-left: 28px;
  }
`;

const RootLabel = styled.span`
  margin-left: 31px;
  font-size: 22px;
  font-weight: 700;
  letter-spacing: 0.2px;
  color: #fff;
`;

const CenterColumn = styled.div`
  display: flex;
  flex-direction: column;
  padding-bottom: 8px;
`;

const Scene = styled.div`
  position: relative;
  width: 560px;
  height: 740px;
  margin: 105px 0 0 342px;
`;

const ModelSvg = styled.svg`
  width: 560px;
  height: 740px;
  filter: blur(0.6px);
`;

const ProfileTag = styled.div`
  position: absolute;
  left: ${(p) => p.$left}px;
  top: ${(p) => p.$top}px;
  display: flex;
  align-items: center;
  gap: 19px;
  width: ${(p) => p.$w}px;
  height: 44px;
  box-sizing: border-box;
  padding: 0 0 2px 19px;
  border-radius: 2px;
  background: rgba(204, 204, 204, 0.94);
  font-size: 21.5px;
  letter-spacing: 0.4px;
  color: #444;
  white-space: nowrap;

  &::before {
    content: "";
    position: absolute;
    left: -4px;
    top: -10px;
    border-top: 10px solid transparent;
    border-left: 20px solid rgba(225, 225, 225, 0.95);
  }
`;

const NavRow = styled.div`
  display: flex;
  justify-content: center;
  gap: 14px;
  margin-top: auto;
  padding-right: 2px;
`;

const NavBar = styled.div`
  display: flex;
  align-items: center;
  height: 48px;
  padding-left: 8px;
  background: #c8c8c8;
`;

const NavIcon = styled.div`
  margin-left: ${(p) => p.$gap}px;
`;

const NavCaret = styled(Caret)`
  margin-left: ${(p) => p.$gap}px;
`;

const RightColumn = styled.div`
  display: flex;
  flex-direction: column;
  padding-top: 218px;
  padding-right: 8px;
`;

const LoftPanel = styled.div`
  display: flex;
  flex-direction: column;
  height: 851px;
  box-sizing: border-box;
  background: #dcdcdc;
  border: 2px solid #aeaeae;
  border-radius: 2px;
`;

const LoftHeader = styled.div`
  display: flex;
  align-items: center;
  height: 47px;
  box-sizing: border-box;
  padding: 0 9px 0 2px;
  background: #d0d0d0;
  border-bottom: 3px solid #aeaeae;
`;

const LoftTitle = styled.span`
  flex: 1;
  margin-left: 13px;
  font-size: 22px;
  color: #666;
`;

const LoftBody = styled.div`
  flex: 1;
  display: flex;
  flex-direction: column;
  gap: 6px;
  padding: 4px 26px 0 17px;
`;

const FieldRow = styled.div`
  display: flex;
  align-items: center;
  height: 46px;
  padding: 0 3px 0 2px;
`;

const FieldLabel = styled.span`
  width: 193px;
  font-size: 22px;
  letter-spacing: 0.3px;
  color: #444;
`;

const ToolButton = styled.div`
  display: flex;
  align-items: center;
  justify-content: center;
  width: 44px;
  height: 46px;
  margin-left: ${(p) => p.$gap || 0}px;
  border-radius: 2px;
  background: ${(p) => (p.$active ? "#4a88b6" : "transparent")};
`;

const ListBox = styled.div`
  display: flex;
  flex-direction: column;
  height: ${(p) => p.$h}px;
  box-sizing: border-box;
  margin: 9px 0 3px;
  background: #fff;
  border: 2px solid #cdcdcd;
`;

const RowList = styled.div`
  margin-top: -3px;
`;

const ListRow = styled.div`
  display: flex;
  align-items: center;
  height: 46px;
  padding-left: 5px;
  border-radius: 2px;
  margin-right: 2px;
  background: ${(p) => (p.$active ? "#9fcfff" : "transparent")};
  font-size: 22px;
  letter-spacing: 0.3px;
  color: #444;
`;

const ListName = styled.span`
  width: 135px;
`;

const FreeCell = styled.div`
  display: flex;
  align-items: center;
  gap: 11px;
  margin-left: 108px;
`;

const ActionRow = styled.div`
  display: flex;
  align-items: center;
  gap: 31px;
  height: 46px;
  margin-top: auto;
  padding-left: 15px;
  padding-bottom: 2px;
`;

const CheckBox = styled.div`
  width: 26px;
  height: 27px;
  box-sizing: border-box;
  margin-left: 6px;
  border: 2px solid #444;
  border-radius: 5px;
  background: linear-gradient(#f2f2f2, #b8b8b8);
  box-shadow: 0 1px 0 #fff;
`;

const SelectBox = styled.div`
  flex: 1;
  display: flex;
  align-items: center;
  height: 46px;
  padding: 0 1px 0 4px;
  border-radius: 2px;
  background: #c6c6c6;
`;

const SelectText = styled.span`
  flex: 1;
  margin-left: 9px;
  font-size: 22px;
  color: #444;
`;

const LoftFooter = styled.div`
  display: flex;
  align-items: center;
  justify-content: space-between;
  height: 71px;
  box-sizing: border-box;
  padding: 0 20px 0 25px;
  background: #d0d0d0;
  border-top: 3px solid #b4b4b4;
`;

const FooterButtons = styled.div`
  display: flex;
  gap: 13px;
`;

const OkButton = styled.div`
  display: flex;
  align-items: center;
  justify-content: center;
  width: 119px;
  height: 38px;
  box-sizing: border-box;
  border: 2px solid #8c8c8c;
  background: linear-gradient(#4f90c8, #28649c);
  font-size: 24px;
  color: #fff;
`;

const CancelButton = styled(OkButton)`
  width: 120px;
  border-color: #bcbcbc;
  background: #eeeeee;
  color: #555;
`;

const Caption = styled.div`
  margin: -3px 0 0 325px;
  font-size: 22.5px;
  font-weight: 700;
  color: #333;
  white-space: nowrap;
`;

const BottomBar = styled.div`
  height: 6px;
  background: #d0d0d0;
`;

const CubeSvg = styled.svg`
  position: absolute;
  top: 0;
  right: 19px;
  width: 180px;
  height: 190px;
  filter: blur(0.5px);
`;

const CubeText = styled.text`
  font-family: "Liberation Sans", sans-serif;
  font-weight: 700;
  fill: #a8a8a8;
`;

const AxisText = styled.text`
  font-family: "Liberation Sans", sans-serif;
  font-size: 24px;
  font-weight: 700;
  text-anchor: middle;
`;
